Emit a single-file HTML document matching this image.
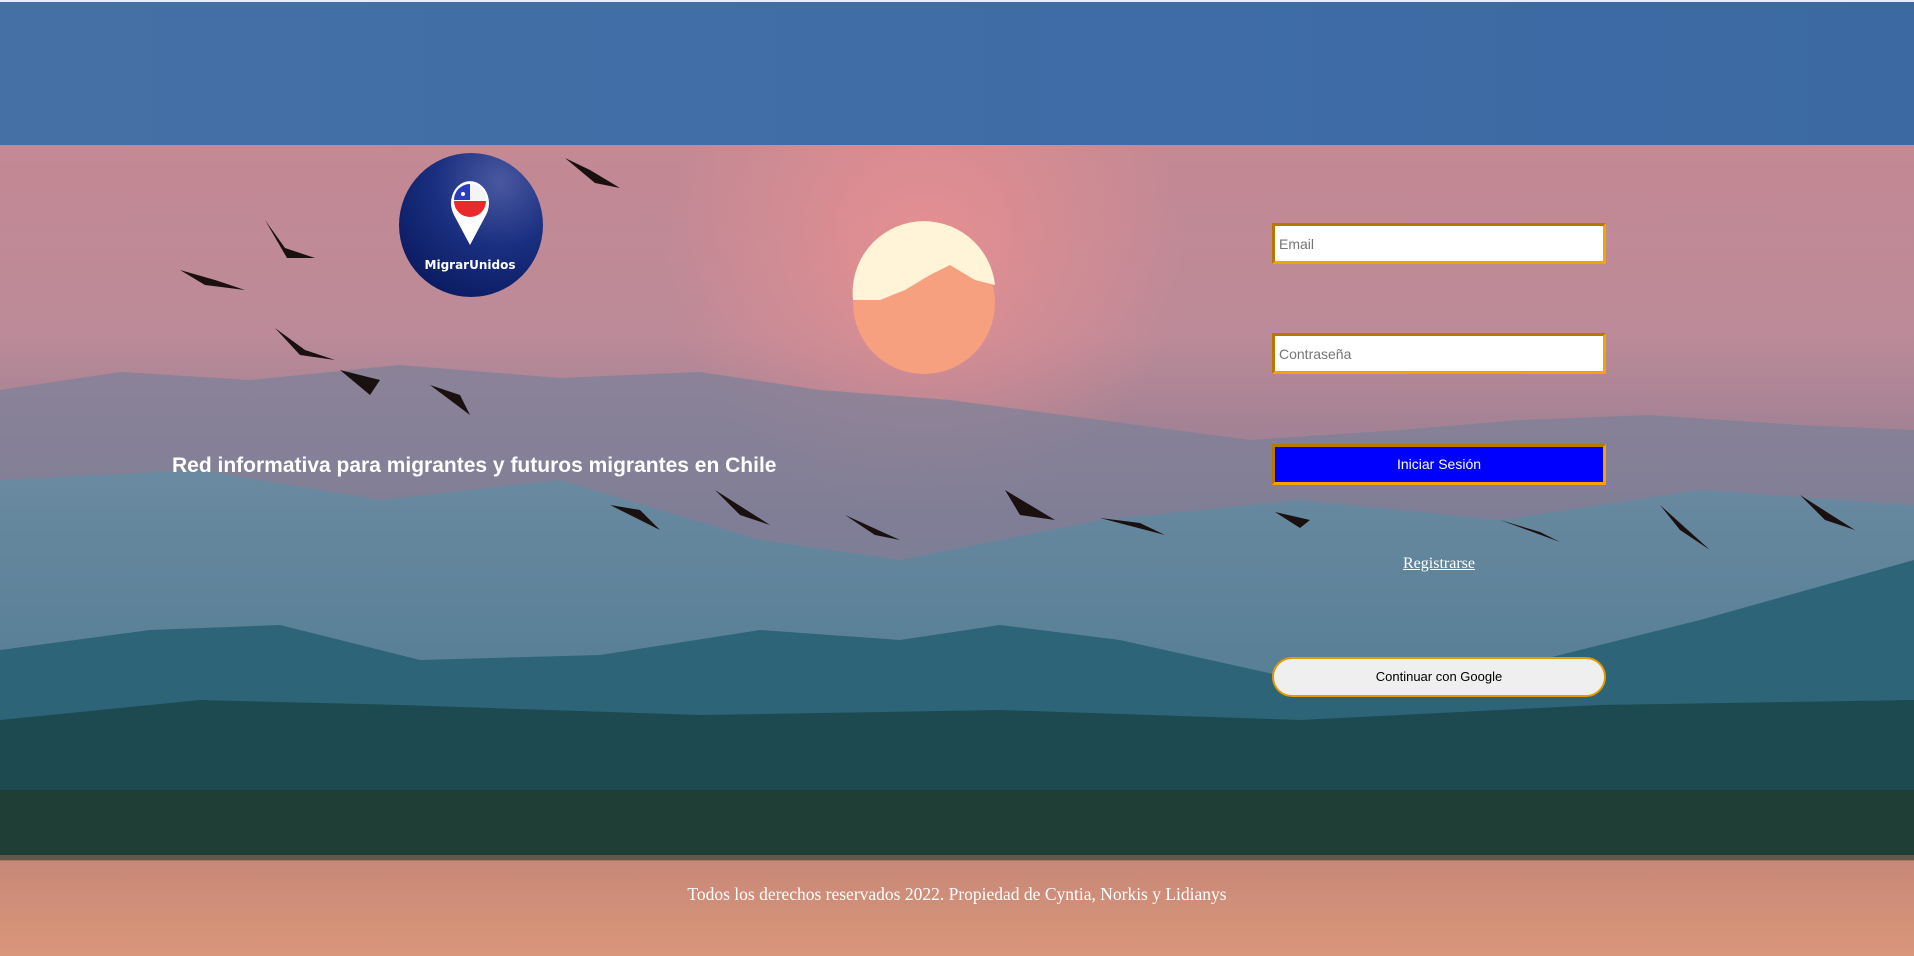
<!DOCTYPE html>
<html><head><meta charset="utf-8"><style>
html,body{margin:0;padding:0;width:1914px;height:956px;overflow:hidden;font-family:"Liberation Sans",sans-serif}
.bg{position:absolute;inset:0}
.hdr{position:absolute;left:0;top:2px;width:1914px;height:143px;background:linear-gradient(90deg,#4470a6,#3f6ca6 60%,#3c69a2);}
.top{position:absolute;left:0;top:0;width:1914px;height:2px;background:#e8eef5}
input{position:absolute;left:1272px;width:334px;height:41px;box-sizing:border-box;border:3px solid #f5a300;border-top-color:#b87800;border-left-color:#b87800;background:#fff;font-size:14px;padding:0 4px;font-family:"Liberation Sans",sans-serif;color:#777}
.btn{position:absolute;left:1272px;top:444px;width:334px;height:41px;box-sizing:border-box;background:#0000ff;border:3px solid #f5a300;border-top-color:#b87800;border-left-color:#b87800;color:#fff;font-size:14px;text-align:center;line-height:35px}
.g{position:absolute;left:1272px;top:657px;width:334px;height:40px;box-sizing:border-box;background:#efefef;border:2px solid #e39a00;border-radius:20px;color:#000;font-size:13px;text-align:center;line-height:36px}
.reg{position:absolute;left:1339px;width:200px;top:555px;text-align:center;font-family:"Liberation Serif",serif;font-size:16px;color:#fff;text-decoration:underline}
.tag{position:absolute;left:172px;top:454px;font-weight:bold;font-size:21px;color:#fff;white-space:nowrap}
.foot{position:absolute;left:0;width:1914px;top:884px;text-align:center;font-family:"Liberation Serif",serif;font-size:17.5px;color:#fff}
</style></head><body>
<svg class="bg" width="1914" height="956" viewBox="0 0 1914 956">
<defs>
<linearGradient id="sky" x1="0" y1="0" x2="0" y2="1">
<stop offset="0" stop-color="#c98890"/><stop offset="0.35" stop-color="#bc8a98"/><stop offset="0.55" stop-color="#8a7a90"/><stop offset="1" stop-color="#5a7c98"/></linearGradient>
<radialGradient id="glow" cx="0.5" cy="0.5" r="0.5"><stop offset="0" stop-color="#f09090" stop-opacity="0.8"/><stop offset="1" stop-color="#f09090" stop-opacity="0"/></radialGradient>
<linearGradient id="water" x1="0" y1="0" x2="0" y2="1"><stop offset="0" stop-color="#c88878"/><stop offset="1" stop-color="#d9967a"/></linearGradient>
<linearGradient id="fog" x1="0" y1="0" x2="0" y2="1"><stop offset="0" stop-color="#6a8aa0"/><stop offset="1" stop-color="#3e7088"/></linearGradient>
</defs>
<rect width="1914" height="956" fill="url(#sky)"/>
<circle cx="924" cy="250" r="260" fill="url(#glow)"/>
<circle cx="924" cy="303" r="71" fill="#f6a080"/>
<path d="M853 300 A71 71 0 0 1 995 285 L975 280 L950 265 L930 275 L905 290 L880 300 Z" fill="#fff4d8"/>
<path d="M0 390 L120 372 L250 380 L400 365 L560 378 L700 372 L820 390 L950 400 L1100 420 L1250 440 L1400 430 L1520 420 L1650 415 L1800 425 L1914 430 L1914 956 L0 956Z" fill="#7a8098" opacity="0.7"/>
<path d="M0 480 L200 470 L380 500 L560 480 L760 540 L900 560 L1100 520 L1300 500 L1500 520 L1700 490 L1914 505 L1914 956 L0 956Z" fill="url(#fog)"/>
<path d="M0 650 L150 630 L280 625 L420 660 L600 655 L760 630 L900 640 L1000 625 L1120 640 L1300 680 L1500 670 L1700 620 L1914 560 L1914 956 L0 956Z" fill="#2d6478"/>
<path d="M0 720 L200 700 L400 705 L700 715 L1000 710 L1300 720 L1600 705 L1914 700 L1914 956 L0 956Z" fill="#1d4a50"/>
<rect x="0" y="790" width="1914" height="70" fill="#1e3e36"/>
<rect x="0" y="860" width="1914" height="96" fill="url(#water)"/>
<rect x="0" y="855" width="1914" height="6" fill="#8a6a5a" opacity="0.6"/>
<g fill="#1a1010">
<path d="M565 158 l25 12 l30 18 l-25 -5z"/><path d="M265 220 l20 28 l30 10 l-28 0z"/><path d="M180 270 l35 10 l30 10 l-40 -5z"/><path d="M275 328 l30 22 l30 10 l-35 -5z"/><path d="M340 370 l40 10 l-10 15z"/><path d="M430 385 l30 10 l10 20z"/><path d="M610 505 l30 5 l20 20z"/><path d="M715 490 l25 25 l30 10z"/><path d="M845 515 l30 20 l25 5z"/><path d="M1005 490 l15 25 l35 5z"/><path d="M1100 518 l40 5 l25 12z"/><path d="M1275 512 l35 8 l-10 8z"/><path d="M1410 522 l30 10 l15 5z"/><path d="M1500 520 l40 12 l20 10z"/><path d="M1660 505 l20 25 l30 20z"/><path d="M1800 495 l25 25 l30 10z"/>
</g>
</svg>
<div class="top"></div>
<div class="hdr"></div>
<svg style="position:absolute;left:399px;top:153px" width="144" height="144" viewBox="0 0 144 144">
<defs><radialGradient id="logo2" cx="0.7" cy="0.2" r="0.9"><stop offset="0" stop-color="#4a58a0"/><stop offset="0.5" stop-color="#1a2f80"/><stop offset="1" stop-color="#0a1a60"/></radialGradient></defs>
<circle cx="72" cy="72" r="72" fill="url(#logo2)"/>
<path d="M71 92 L55 62 A19 22 0 1 1 87 62 Z" fill="#fff"/>
<circle cx="71" cy="47" r="16" fill="#fff"/>
<path d="M55 47 A16 16 0 0 1 87 47Z" fill="#f4f4f4"/>
<path d="M55 47 A16 16 0 0 1 71 31 L71 47Z" fill="#2a3cc0"/>
<circle cx="64" cy="41" r="2" fill="#fff"/>
<path d="M55 48 A16 16 0 0 0 87 48Z" fill="#e82a2a"/>
<text x="71" y="116" font-family="DejaVu Sans" font-weight="bold" font-size="12" fill="#fff" text-anchor="middle">MigrarUnidos</text>
</svg>
<div class="tag">Red informativa para migrantes y futuros migrantes en Chile</div>
<input style="top:223px" placeholder="Email">
<input style="top:333px" placeholder="Contraseña">
<div class="btn">Iniciar Sesión</div>
<div class="reg">Registrarse</div>
<div class="g">Continuar con Google</div>
<div class="foot">Todos los derechos reservados 2022. Propiedad de Cyntia, Norkis y Lidianys</div>
</body></html>
